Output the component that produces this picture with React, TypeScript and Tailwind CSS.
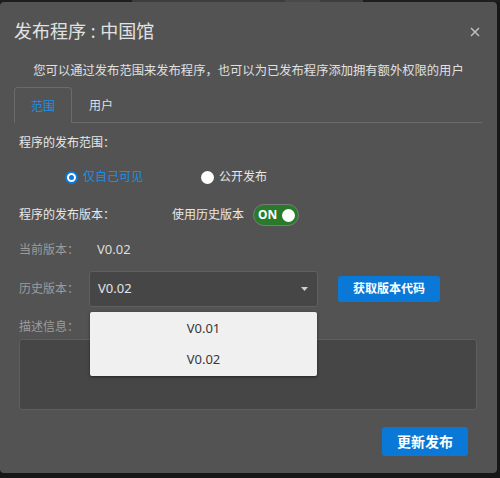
import React from "react";

export default function App() {
  const font = { fontFamily: '"Noto Sans", "Noto Sans CJK SC", sans-serif' };
  return (
    <div className="w-[500px] h-[478px] bg-[#171717] overflow-hidden" style={font}>
      <div className="flex h-[2px]">
        <div className="w-[132px] bg-[#1e1e1e]" />
        <div className="w-[153px] bg-[#3d3d3d]" />
        <div className="w-[35px] bg-[#4a4a4a]" />
        <div className="w-[43px] bg-[#3d3d3d]" />
        <div className="flex-1 bg-[#1e1e1e]" />
      </div>
      <div className="w-[497px] h-[471px] bg-[#535353] rounded-[4px] flex flex-col">
        {/* header */}
        <div className="pt-[17px] pl-[14px] pr-[17px] flex items-center justify-between">
          <div className="text-[18px] leading-[24px] h-[24px] text-[#e2e2e2]">发布程序 : 中国馆</div>
          <svg width="10" height="10" viewBox="0 0 10 10" className="mt-[2px]">
            <path d="M1 1 L9 9 M9 1 L1 9" stroke="#c4c4c4" strokeWidth="1.4" />
          </svg>
        </div>
        <div className="mt-[19px] text-center text-[12.3px] leading-[18px] text-[#e0e0e0]">
          您可以通过发布范围来发布程序，也可以为已发布程序添加拥有额外权限的用户
        </div>
        {/* tabs */}
        <div className="mt-[7px] mx-[14px] w-[468px] flex border-b border-[#6b6b6b] h-[36px]">
          <div className="h-[36px] -mb-px px-[16px] border border-b-0 border-[#6b6b6b] rounded-t-[4px] bg-[#535353] text-[12px] text-[#1a90e6] flex items-center pt-[2px]">
            范围
          </div>
          <div className="h-[35px] px-[17px] text-[12px] text-[#e0e0e0] flex items-center pt-[2px]">
            用户
          </div>
        </div>
        <div className="px-[19px] flex flex-col">
          {/* row 1 */}
          <div className="mt-[9px] h-[22px] flex items-center text-[12px] text-[#e8e8e8]">程序的发布范围：</div>
          {/* row 2 radios */}
          <div className="mt-[12px] h-[22px] flex items-center pl-[46px] text-[12px]">
            <div className="w-[13px] h-[13px] rounded-full bg-white border-[2px] border-[#0b7ad8] flex items-center justify-center">
              <div className="w-[5px] h-[5px] rounded-full bg-[#0b7ad8]" />
            </div>
            <span className="ml-[5px] text-[#1a8fe8]">仅自己可见</span>
            <div className="ml-[58px] w-[13px] h-[13px] rounded-full bg-white" />
            <span className="ml-[5px] text-[#e8e8e8]">公开发布</span>
          </div>
          {/* row 3 */}
          <div className="mt-[16px] h-[22px] flex items-center text-[12px] text-[#e8e8e8]">
            <span className="w-[153px]">程序的发布版本：</span>
            <span>使用历史版本</span>
            <div className="ml-[9px] w-[46px] h-[22px] rounded-full bg-[#2a7a2c] border border-[#7a7a7a] flex items-center pl-[4px] pr-[3px] justify-between">
              <span className="text-[12px] font-bold text-white leading-none">ON</span>
              <div className="w-[13px] h-[13px] rounded-full bg-white" />
            </div>
          </div>
          {/* row 4 */}
          <div className="mt-[13px] h-[22px] flex items-center text-[12px]">
            <span className="w-[78px] text-[#9c9c9c]">当前版本：</span>
            <span className="text-[13px] text-[#dedede]">V0.02</span>
          </div>
          {/* row 5 */}
          <div className="mt-[10px] h-[36px] flex items-center text-[12px]">
            <span className="w-[70px] text-[#9c9c9c]">历史版本：</span>
            <div className="relative w-[229px] h-[36px]">
              <div className="w-full h-full rounded-[3px] bg-[#464646] border border-[#606060] flex items-center pl-[8px] pr-[9px] justify-between">
                <span className="text-[13px] text-[#e4e4e4]">V0.02</span>
                <svg width="7" height="4" viewBox="0 0 7 4">
                  <path d="M0 0 L7 0 L3.5 4 Z" fill="#cfcfcf" />
                </svg>
              </div>
              <div className="absolute left-[1px] top-[41px] w-[227px] h-[64px] bg-[#f0f0f0] rounded-[2px] shadow-[0_1px_3px_rgba(0,0,0,0.5)] flex flex-col z-10">
                <div className="h-[32px] flex items-center justify-center text-[13px] text-[#383838] pt-[1px]">V0.01</div>
                <div className="h-[32px] flex items-center justify-center text-[13px] text-[#383838]">V0.02</div>
              </div>
            </div>
            <div className="ml-[20px] w-[102px] h-[26px] rounded-[3px] bg-[#0a78d6] flex items-center justify-center text-[12px] font-bold text-white">
              获取版本代码
            </div>
          </div>
          {/* row 6 */}
          <div className="mt-[9px] h-[22px] flex items-center text-[12px] text-[#9c9c9c]">描述信息：</div>
          <div className="mt-[1px] w-[458px] h-[71px] rounded-[3px] bg-[#464646] border border-[#5e5e5e]" />
          <div className="mt-[17px] flex justify-end pr-[10px]">
            <div className="w-[86px] h-[29px] rounded-[3px] bg-[#0a78d6] flex items-center justify-center text-[14px] font-bold text-white">
              更新发布
            </div>
          </div>
        </div>
      </div>
    </div>
  );
}
